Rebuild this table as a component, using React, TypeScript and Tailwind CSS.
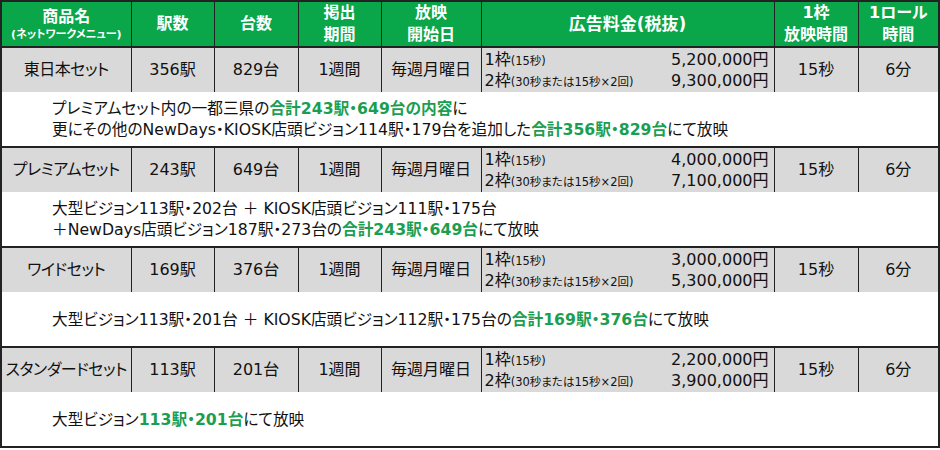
import React from "react";

type Plan = {
  name: string;
  stations: string;
  units: string;
  price1: string;
  price2: string;
  desc: React.ReactNode;
};

const G = ({ children }: { children: React.ReactNode }) => (
  <span className="font-bold text-[#1b9e50]">{children}</span>
);

const plans: Plan[] = [
  {
    name: "東日本セット",
    stations: "356駅",
    units: "829台",
    price1: "5,200,000円",
    price2: "9,300,000円",
    desc: (
      <>
        <div className="h-[21px]">
          プレミアムセット内の一都三県の<G>合計243駅・649台の内容</G>に
        </div>
        <div className="h-[21px]">
          更にその他のNewDays・KIOSK店頭ビジョン114駅・179台を追加した<G>合計356駅・829台</G>にて放映
        </div>
      </>
    ),
  },
  {
    name: "プレミアムセット",
    stations: "243駅",
    units: "649台",
    price1: "4,000,000円",
    price2: "7,100,000円",
    desc: (
      <>
        <div className="h-[21px]">大型ビジョン113駅・202台 ＋ KIOSK店頭ビジョン111駅・175台</div>
        <div className="h-[21px]">
          ＋NewDays店頭ビジョン187駅・273台の<G>合計243駅・649台</G>にて放映
        </div>
      </>
    ),
  },
  {
    name: "ワイドセット",
    stations: "169駅",
    units: "376台",
    price1: "3,000,000円",
    price2: "5,300,000円",
    desc: (
      <div className="h-[21px]">
        大型ビジョン113駅・201台 ＋ KIOSK店頭ビジョン112駅・175台の<G>合計169駅・376台</G>にて放映
      </div>
    ),
  },
  {
    name: "スタンダードセット",
    stations: "113駅",
    units: "201台",
    price1: "2,200,000円",
    price2: "3,900,000円",
    desc: (
      <div className="h-[21px]">
        大型ビジョン<G>113駅・201台</G>にて放映
      </div>
    ),
  },
];

const th = "p-0 bg-[#0aa64a] text-white font-bold text-center align-middle border border-[#222] leading-[22px] text-[16px]";
const td = "p-0 bg-[#d9d9d9] text-center align-middle border-x border-[#222] text-[16px]";

function Cell({ children, className = "" }: { children: React.ReactNode; className?: string }) {
  return (
    <td className={`${td} ${className}`}>
      <div className="h-[44px] flex items-center justify-center overflow-hidden">{children}</div>
    </td>
  );
}

function Head({ children, className = "" }: { children: React.ReactNode; className?: string }) {
  return (
    <th className={`${th} ${className}`}>
      <div className="h-[44px] flex flex-col items-center justify-center overflow-hidden">{children}</div>
    </th>
  );
}

function PriceLine({ label, note, price }: { label: string; note: string; price: string }) {
  return (
    <div className="h-[21px] leading-[21px] flex justify-between items-baseline">
      <span>
        {label}
        <span className="text-[11.5px]">{note}</span>
      </span>
      <span>{price}</span>
    </div>
  );
}

export default function App() {
  return (
    <div
      className="bg-white w-[940px] h-[450px] text-[#111] [font-feature-settings:'palt']"
      style={{ fontFamily: '"DejaVu Sans", "Noto Sans CJK JP", sans-serif' }}
    >
      <table className="table-fixed border-collapse w-[938px] border-2 border-[#222]">
        <colgroup>
          <col className="w-[130px]" />
          <col className="w-[83px]" />
          <col className="w-[84px]" />
          <col className="w-[83px]" />
          <col className="w-[100px]" />
          <col className="w-[293px]" />
          <col className="w-[84px]" />
          <col className="w-[81px]" />
        </colgroup>
        <thead>
          <tr>
            <Head>
              <div>商品名</div>
              <div className="text-[11px] leading-[14px]">(ネットワークメニュー)</div>
            </Head>
            <Head>駅数</Head>
            <Head>台数</Head>
            <Head>
              <div>掲出</div>
              <div>期間</div>
            </Head>
            <Head>
              <div>放映</div>
              <div>開始日</div>
            </Head>
            <Head className="text-[17px]">広告料金(税抜)</Head>
            <Head>
              <div>1枠</div>
              <div>放映時間</div>
            </Head>
            <Head>
              <div>1ロール</div>
              <div>時間</div>
            </Head>
          </tr>
        </thead>
        <tbody>
          {plans.map((p) => (
            <React.Fragment key={p.name}>
              <tr className="border-t-2 border-[#222]">
                <Cell className="tracking-[-0.5px]">{p.name}</Cell>
                <Cell>{p.stations}</Cell>
                <Cell>{p.units}</Cell>
                <Cell>1週間</Cell>
                <Cell>毎週月曜日</Cell>
                <td className={`${td} text-left`}>
                  <div className="h-[44px] pl-[3px] pr-[5px] flex flex-col justify-center overflow-hidden">
                    <PriceLine label="1枠" note="(15秒)" price={p.price1} />
                    <PriceLine label="2枠" note="(30秒または15秒×2回)" price={p.price2} />
                  </div>
                </td>
                <Cell>15秒</Cell>
                <Cell>6分</Cell>
              </tr>
              <tr>
                <td colSpan={8} className="p-0 bg-white text-left align-middle text-[15.7px] leading-[21px]">
                  <div className="h-[54px] pl-[50px] flex flex-col justify-center overflow-hidden">{p.desc}</div>
                </td>
              </tr>
            </React.Fragment>
          ))}
        </tbody>
      </table>
    </div>
  );
}
